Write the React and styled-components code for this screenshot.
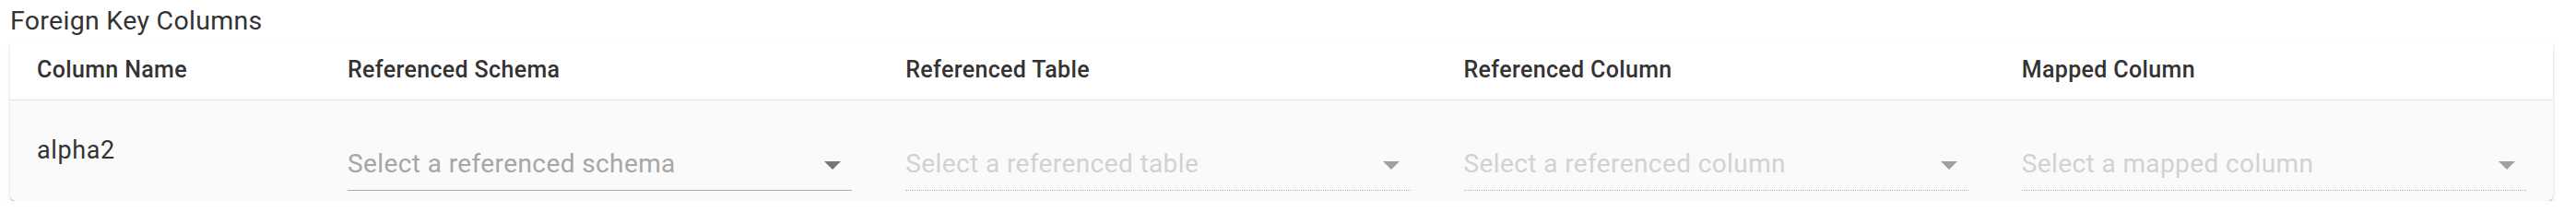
import styled, { createGlobalStyle } from 'styled-components';

const GlobalStyle = createGlobalStyle`
  body {
    margin: 0;
    background: #fff;
    font-family: Roboto, "Liberation Sans", sans-serif;
  }
`;

const Page = styled.div`
  padding: 0 25px 0 11px;
`;

const Title = styled.h2`
  margin: 0;
  padding-top: 6px;
  height: 37px;
  font-size: 28.5px;
  font-weight: 400;
  line-height: 1.2;
  letter-spacing: 0.3px;
  color: #333;
`;

const Card = styled.div`
  background: #fafafa;
  border-radius: 7px;
  overflow: hidden;
  box-shadow: 0 3px 2px -2px rgba(0, 0, 0, 0.28), 0 2px 2px 0 rgba(0, 0, 0, 0.12), 0 2px 5px 0 rgba(0, 0, 0, 0.1);
`;

const Row = styled.div`
  display: grid;
  grid-template-columns: 337px repeat(4, 1fr);
  background: ${p => (p.$head ? '#fff' : '#fafafa')};
  height: ${p => (p.$head ? '65px' : '109px')};
  border-bottom: ${p => (p.$head ? '1px solid #e0e0e0' : 'none')};
`;

const HeadCell = styled.div`
  display: flex;
  align-items: center;
  padding: 0 29px;
  font-size: 25px;
  font-weight: 500;
  letter-spacing: 0.35px;
  color: #333;
`;

const NameCell = styled.div`
  display: flex;
  align-items: center;
  padding: 0 29px;
  font-size: 27px;
  line-height: 35px;
  letter-spacing: 0.6px;
  color: #333;
`;

const SelectCell = styled.div`
  display: flex;
  align-items: flex-end;
  padding: 0 29px 11px;
`;

const Select = styled.div`
  position: relative;
  flex: 1;
  padding-bottom: 11px;
  border-bottom: 1px ${p => (p.$disabled ? 'dotted #b0b0b0' : 'solid #acacac')};
  font-size: 28px;
  line-height: 1.2;
  letter-spacing: 0.4px;
  color: ${p => (p.$disabled ? '#d2d2d2' : '#a6a6a6')};
  white-space: nowrap;
`;

const Arrow = styled.span`
  position: absolute;
  right: 12px;
  top: 14px;
  width: 0;
  height: 0;
  border-left: 9px solid transparent;
  border-right: 9px solid transparent;
  border-top: 9px solid ${p => (p.$disabled ? '#a0a0a0' : '#757575')};
`;

const headers = ['Column Name', 'Referenced Schema', 'Referenced Table', 'Referenced Column', 'Mapped Column'];

const selects = [
  { text: 'Select a referenced schema', disabled: false },
  { text: 'Select a referenced table', disabled: true },
  { text: 'Select a referenced column', disabled: true },
  { text: 'Select a mapped column', disabled: true },
];

export default function App() {
  return (
    <Page>
      <GlobalStyle />
      <Title>Foreign Key Columns</Title>
      <Card>
        <Row $head>
          {headers.map(h => (
            <HeadCell key={h}>{h}</HeadCell>
          ))}
        </Row>
        <Row>
          <NameCell>alpha2</NameCell>
          {selects.map(s => (
            <SelectCell key={s.text}>
              <Select $disabled={s.disabled}>
                {s.text}
                <Arrow $disabled={s.disabled} />
              </Select>
            </SelectCell>
          ))}
        </Row>
      </Card>
    </Page>
  );
}
